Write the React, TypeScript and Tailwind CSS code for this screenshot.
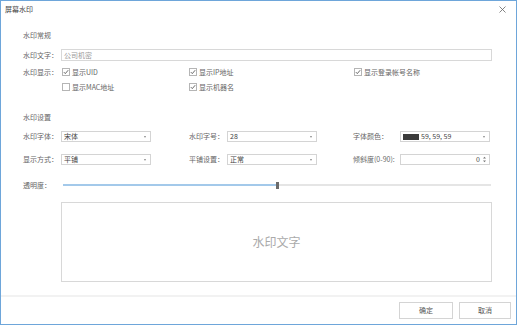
const font = { fontFamily: '"Noto Sans CJK SC", "Noto Sans", sans-serif' }

function Check({ label, checked }: { label: string; checked: boolean }) {
  return (
    <div className="flex items-center gap-[2px]">
      <span className="flex h-[8px] w-[8px] items-center justify-center border border-[#b5b5b5] bg-white">
        {checked && (
          <svg width="6" height="6" viewBox="0 0 6 6">
            <path d="M0.8 3.1 L2.3 4.6 L5.2 1.2" fill="none" stroke="#444" strokeWidth="0.8" />
          </svg>
        )}
      </span>
      <span>{label}</span>
    </div>
  )
}

function Select({ value, swatch }: { value: string; swatch?: boolean }) {
  return (
    <div className="flex h-[11px] w-[90px] items-center border border-[#d4d4d4] bg-white pl-[2px] pr-[4px]">
      {swatch && <span className="mr-[2px] h-[6px] w-[16px] bg-[#3b3b3b]" />}
      <span className="flex-1 text-[#444]">{value}</span>
      <span className="h-0 w-0 border-x-[1.5px] border-t-[2px] border-x-transparent border-t-[#888]" />
    </div>
  )
}

export default function App() {
  return (
    <div
      className="flex h-[325px] w-[517px] flex-col border border-[#6ea6da] bg-white text-[7px] leading-none text-[#666]"
      style={font}
    >
      {/* title bar */}
      <div className="flex h-[15px] items-center justify-between pl-[4px] pr-[10px] pt-[1px]">
        <span className="text-[#444]">屏幕水印</span>
        <svg width="7" height="7" viewBox="0 0 7 7">
          <path d="M0.5 0.5 L6.5 6.5 M6.5 0.5 L0.5 6.5" stroke="#666" strokeWidth="0.8" />
        </svg>
      </div>

      <div className="flex flex-1 flex-col pl-[22px] pr-[24px]">
        <div className="mt-[16px] h-[8px]">水印常规</div>

        <div className="mt-[9px] flex h-[12px] items-center">
          <span className="w-[38px]">水印文字：</span>
          <div className="flex h-[12px] flex-1 items-center border border-[#d8d8d8] pl-[2px] text-[#999]">
            公司机密
          </div>
        </div>

        <div className="mt-[7px] flex h-[8px] items-center">
          <span className="w-[39px]">水印显示：</span>
          <div className="w-[127px]">
            <Check label="显示UID" checked />
          </div>
          <div className="w-[165px]">
            <Check label="显示IP地址" checked />
          </div>
          <Check label="显示登录帐号名称" checked />
        </div>

        <div className="mt-[7px] flex h-[8px] items-center">
          <span className="w-[39px]" />
          <div className="w-[127px]">
            <Check label="显示MAC地址" checked={false} />
          </div>
          <Check label="显示机器名" checked />
        </div>

        <div className="mt-[23px] h-[8px]">水印设置</div>

        <div className="mt-[9px] flex h-[11px] items-center">
          <span className="w-[38px]">水印字体：</span>
          <Select value="宋体" />
          <span className="ml-[38px] w-[38px]">水印字号：</span>
          <Select value="28" />
          <span className="ml-[36px] w-[47px]">字体颜色：</span>
          <Select value="59, 59, 59" swatch />
        </div>

        <div className="mt-[12px] flex h-[11px] items-center">
          <span className="w-[38px]">显示方式：</span>
          <Select value="平铺" />
          <span className="ml-[38px] w-[38px]">平铺设置：</span>
          <Select value="正常" />
          <span className="ml-[36px] w-[47px]">倾斜度(0-90):</span>
          <div className="flex h-[11px] w-[90px] items-center justify-end gap-[3px] border border-[#d4d4d4] pr-[3px] text-[#444]">
            <span>0</span>
            <svg width="3" height="7" viewBox="0 0 3 7">
              <path d="M0 2.5 L1.5 0.8 L3 2.5 Z M0 4.5 L1.5 6.2 L3 4.5 Z" fill="#777" />
            </svg>
          </div>
        </div>

        <div className="mt-[16px] flex h-[8px] items-center">
          <span className="w-[40px] shrink-0">透明度：</span>
          {/* slider: filled part, thumb, rest */}
          <div className="flex h-[8px] w-[428px] items-center">
            <div className="h-[2px] w-[213px] shrink-0 bg-[#a3c9ea]" />
            <div className="h-[7px] w-[3px] shrink-0 bg-[#6b6b6b]" />
            <div className="h-[2px] flex-1 bg-[#e5e5e5]" />
          </div>
        </div>

        <div className="mt-[13px] ml-[38px] flex h-[80px] items-center justify-center border border-[#d8d8d8] text-[12px] text-[#aaa]">
          水印文字
        </div>
      </div>

      {/* footer */}
      <div className="flex h-[29px] items-start justify-end gap-[6px] border-t-2 border-[#f2f2f2] pr-[5px] pt-[5px]">
        <button className="flex h-[17px] w-[54px] items-center justify-center border border-[#d4d4d4] bg-white text-[#555]">
          确定
        </button>
        <button className="flex h-[17px] w-[52px] items-center justify-center border border-[#d4d4d4] bg-white text-[#555]">
          取消
        </button>
      </div>
    </div>
  )
}
